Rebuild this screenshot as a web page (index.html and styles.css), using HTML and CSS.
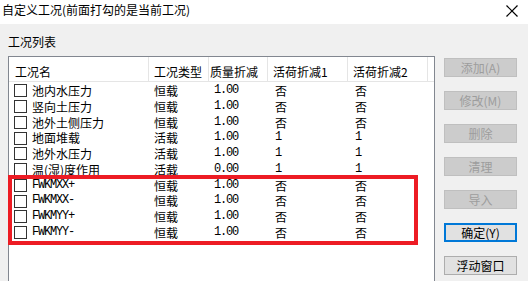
FILE: index.html
```html
<!DOCTYPE html>
<html lang="zh-cn">

<head>
    <meta charset="UTF-8">
    <meta name="viewport" content="width=device-width, initial-scale=1.0">
    <title>自定义工况</title>
    <link rel="stylesheet" href="styles.css">
</head>

<body>
    <div class="window">
        <div class="titlebar">
            <span class="title">自定义工况(前面打勾的是当前工况)</span>
            <svg class="close-btn" width="12" height="12" viewBox="0 0 12 12">
                <line x1="0.5" y1="0.5" x2="11.5" y2="11.5" stroke="#000" stroke-width="1.2" />
                <line x1="11.5" y1="0.5" x2="0.5" y2="11.5" stroke="#000" stroke-width="1.2" />
            </svg>
        </div>

        <div class="client">
            <section class="main">
                <div class="caption">工况列表</div>

                <div class="listview">
                    <div class="lv-head">
                        <div class="col c1">工况名</div>
                        <div class="col c2">工况类型</div>
                        <div class="col c3">质量折减</div>
                        <div class="col c4">活荷折减1</div>
                        <div class="col c5">活荷折减2</div>
                        <div class="col c6"></div>
                    </div>

                    <div class="lv-body">
                        <div class="row">
                            <div class="c1"><span class="check"></span>池内水压力</div>
                            <div class="c2">恒载</div>
                            <div class="c3 num">1.00</div>
                            <div class="c4">否</div>
                            <div class="c5">否</div>
                        </div>
                        <div class="row">
                            <div class="c1"><span class="check"></span>竖向土压力</div>
                            <div class="c2">恒载</div>
                            <div class="c3 num">1.00</div>
                            <div class="c4">否</div>
                            <div class="c5">否</div>
                        </div>
                        <div class="row">
                            <div class="c1"><span class="check"></span>池外土侧压力</div>
                            <div class="c2">恒载</div>
                            <div class="c3 num">1.00</div>
                            <div class="c4">否</div>
                            <div class="c5">否</div>
                        </div>
                        <div class="row">
                            <div class="c1"><span class="check"></span>地面堆载</div>
                            <div class="c2">活载</div>
                            <div class="c3 num">1.00</div>
                            <div class="c4 num">1</div>
                            <div class="c5 num">1</div>
                        </div>
                        <div class="row">
                            <div class="c1"><span class="check"></span>池外水压力</div>
                            <div class="c2">活载</div>
                            <div class="c3 num">1.00</div>
                            <div class="c4 num">1</div>
                            <div class="c5 num">1</div>
                        </div>
                        <div class="row">
                            <div class="c1"><span class="check"></span>温(湿)度作用</div>
                            <div class="c2">活载</div>
                            <div class="c3 num">0.00</div>
                            <div class="c4 num">1</div>
                            <div class="c5 num">1</div>
                        </div>
                        <div class="row">
                            <div class="c1"><span class="check"></span><span class="num">FWKMXX+</span></div>
                            <div class="c2">恒载</div>
                            <div class="c3 num">1.00</div>
                            <div class="c4">否</div>
                            <div class="c5">否</div>
                        </div>
                        <div class="row">
                            <div class="c1"><span class="check"></span><span class="num">FWKMXX-</span></div>
                            <div class="c2">恒载</div>
                            <div class="c3 num">1.00</div>
                            <div class="c4">否</div>
                            <div class="c5">否</div>
                        </div>
                        <div class="row">
                            <div class="c1"><span class="check"></span><span class="num">FWKMYY+</span></div>
                            <div class="c2">恒载</div>
                            <div class="c3 num">1.00</div>
                            <div class="c4">否</div>
                            <div class="c5">否</div>
                        </div>
                        <div class="row">
                            <div class="c1"><span class="check"></span><span class="num">FWKMYY-</span></div>
                            <div class="c2">恒载</div>
                            <div class="c3 num">1.00</div>
                            <div class="c4">否</div>
                            <div class="c5">否</div>
                        </div>
                    </div>
                </div>
            </section>

            <aside class="actions">
                <button class="btn" disabled>添加(A)</button>
                <button class="btn" disabled>修改(M)</button>
                <button class="btn" disabled>删除</button>
                <button class="btn" disabled>清理</button>
                <button class="btn" disabled>导入</button>
                <button class="btn focus">确定(Y)</button>
                <button class="btn">浮动窗口</button>
            </aside>
        </div>

        <!-- 红框标注 -->
        <div class="mark"></div>
    </div>
</body>

</html>
```

FILE: styles.css
```css
body {
    margin: 0;
    padding: 0;
    font-family: "Noto Sans CJK SC", sans-serif;
    font-size: 12px;
    color: #000;
    background-color: #f0f0f0;
}

.window {
    position: relative;
    width: 528px;
    height: 281px;
    overflow: hidden;
}

.titlebar {
    position: relative;
    height: 24px;
    background-color: #fff;
    padding-left: 2px;
}

.title {
    display: block;
    line-height: 16px;
    padding-top: 2px;
}

/* 右上角关闭按钮 */
.close-btn {
    position: absolute;
    right: 10px;
    top: 5px;
    display: block;
}

.client {
    display: flex;
    height: 257px;
}

.main {
    width: 427px;
    padding: 10px 0 0 8px;
}

.caption {
    line-height: 16px;
    margin-bottom: 6px;
}

.listview {
    width: 425px;
    height: 240px;
    border: 1px solid #828790;
    background-color: #fff;
}

.lv-head,
.row {
    display: grid;
    grid-template-columns: 140px 60px 59px 80px 80px 1fr;
}

.lv-head {
    height: 24px;
    border-bottom: 1px solid #e5e5e5;
}

.lv-head .col {
    border-right: 1px solid #e5e5e5;
    padding: 7px 0 0 5px;
    line-height: 16px;
    white-space: nowrap;
    overflow: hidden;
}

.lv-head .c1 {
    padding-left: 6px;
}

.lv-head .c3 {
    padding-left: 1px;
}

.lv-head .c6 {
    border-right: none;
}

.lv-body {
    padding-top: 1px;
}

.row {
    height: 15.75px;
    line-height: 15.75px;
    white-space: nowrap;
}

.row > div {
    padding-left: 5px;
}

.row .c1 {
    display: flex;
    align-items: center;
}

.row .c4,
.row .c5 {
    padding-left: 7px;
}

.check {
    width: 11px;
    height: 11px;
    border: 1px solid #333;
    background-color: #fff;
    margin-right: 5px;
}

.num {
    font-family: "Liberation Mono", monospace;
    font-size: 12px;
    letter-spacing: -1.2px;
}

.actions {
    display: flex;
    flex-direction: column;
    gap: 14px;
    padding: 34px 0 0 9px;
}

.btn {
    width: 73px;
    height: 19px;
    padding: 0;
    font-family: "Noto Sans CJK SC", sans-serif;
    font-size: 12px;
    line-height: 16px;
    color: #000;
    background-color: #e1e1e1;
    border: 1px solid #adadad;
}

.btn:disabled {
    color: #9d9d9d;
    background-color: #cccccc;
    border-color: #bfbfbf;
}

.btn.focus {
    border: 2px solid #0078d7;
}

.mark {
    position: absolute;
    left: 8px;
    top: 175px;
    width: 402px;
    height: 62px;
    border: 4px solid #ed1c24;
}
```
